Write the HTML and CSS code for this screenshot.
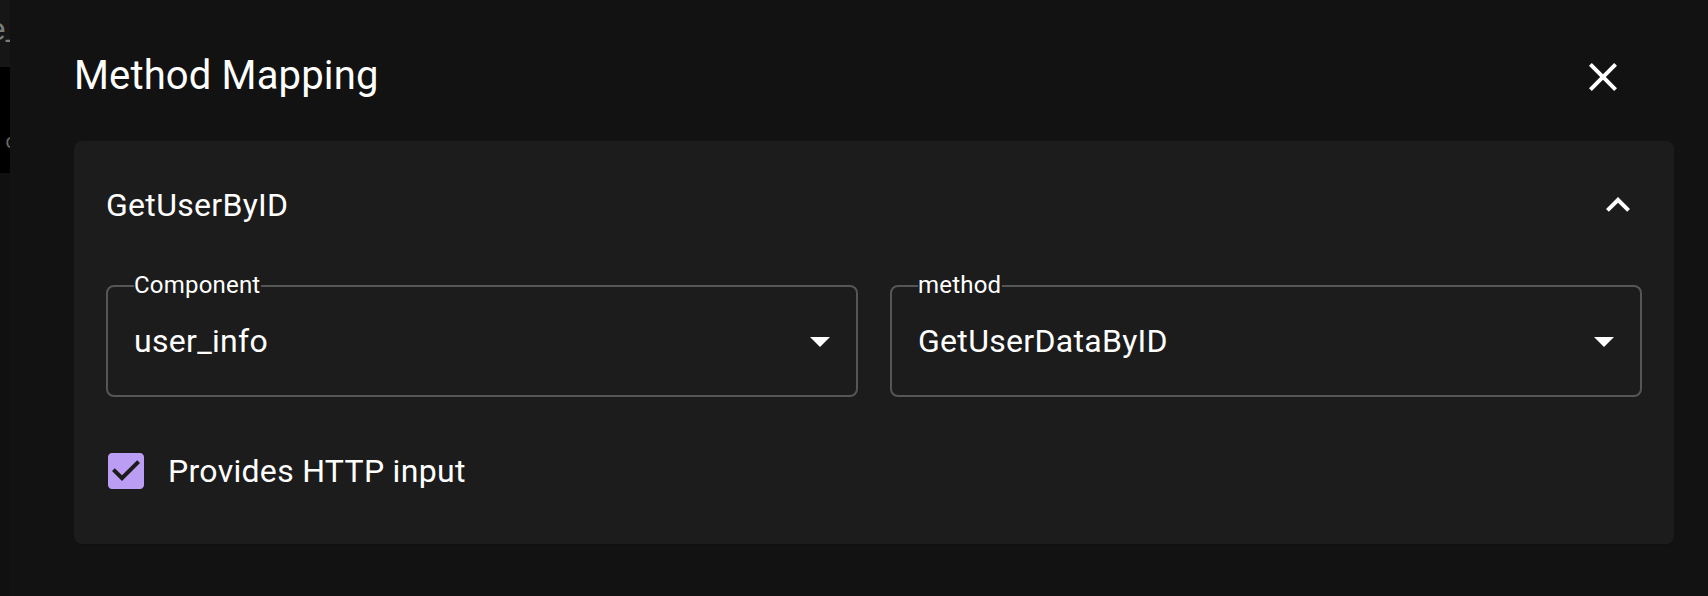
FILE: index.html
```html
<!DOCTYPE html>
<html lang="en">
<head>
<meta charset="utf-8">
<title>Method Mapping</title>
<link rel="stylesheet" href="styles.css">
</head>
<body>
<div class="page">
  <div class="strip">
    <div class="strip-top"><span class="strip-text">name_</span></div>
    <div class="strip-black"><span class="strip-text small">c</span></div>
    <div class="strip-rest"></div>
  </div>
  <div class="dialog">
    <div class="dialog-title">
      <h2 class="title-text">Method Mapping</h2>
      <button class="icon-btn close-btn" aria-label="close">
        <svg viewBox="0 0 24 24" width="48" height="48"><path fill="#fff" d="M19 6.41 17.59 5 12 10.59 6.41 5 5 6.41 10.59 12 5 17.59 6.41 19 12 13.41 17.59 19 19 17.59 13.41 12z"/></svg>
      </button>
    </div>
    <div class="accordion">
      <div class="summary">
        <span class="summary-text">GetUserByID</span>
        <svg class="summary-icon" viewBox="0 0 24 24" width="48" height="48"><path fill="#fff" d="m12 8-6 6 1.41 1.41L12 10.83l4.59 4.58L18 14z"/></svg>
      </div>
      <div class="details">
        <div class="fields">
          <div class="field">
            <span class="field-label">Component</span>
            <span class="field-value">user_info</span>
            <svg class="field-arrow" viewBox="0 0 24 24" width="48" height="48"><path fill="#fff" d="M7 10l5 5 5-5z"/></svg>
          </div>
          <div class="field">
            <span class="field-label">method</span>
            <span class="field-value">GetUserDataByID</span>
            <svg class="field-arrow" viewBox="0 0 24 24" width="48" height="48"><path fill="#fff" d="M7 10l5 5 5-5z"/></svg>
          </div>
        </div>
        <label class="check">
          <span class="check-box">
            <svg viewBox="0 0 24 24" width="48" height="48"><path fill="#bb9ef3" d="M19 3H5c-1.11 0-2 .9-2 2v14c0 1.1.89 2 2 2h14c1.11 0 2-.9 2-2V5c0-1.1-.89-2-2-2zm-9 14l-5-5 1.41-1.41L10 14.17l7.59-7.59L19 8l-9 9z"/></svg>
          </span>
          <span class="check-label">Provides HTTP input</span>
        </label>
      </div>
    </div>
  </div>
</div>
</body>
</html>
```

FILE: styles.css
```css
html, body {
  margin: 0;
  padding: 0;
  background: #121212;
}

body {
  font-family: Roboto, "Liberation Sans", Arial, sans-serif;
  color: #fff;
}

.page {
  display: flex;
  width: 1708px;
  height: 596px;
  overflow: hidden;
}

.strip {
  width: 10px;
  flex: 0 0 10px;
  display: flex;
  flex-direction: column;
  overflow: hidden;
}

.strip-top {
  height: 67px;
  box-sizing: border-box;
  padding-top: 5px;
  background: #161616;
  display: flex;
  justify-content: flex-end;
  align-items: flex-start;
  overflow: hidden;
}

.strip-text {
  white-space: nowrap;
  font-size: 32px;
  line-height: 48px;
  color: #7c7c7c;
  margin-right: -10px;
}

.strip-black {
  height: 106px;
  box-sizing: border-box;
  padding-top: 62px;
  background: #000;
  display: flex;
  justify-content: flex-end;
  align-items: flex-start;
  overflow: hidden;
}

.strip-text.small {
  font-size: 20px;
  line-height: 24px;
  margin-right: -6px;
  color: #6a6a6a;
}

.strip-rest {
  flex: 1;
  background: #101010;
}

.dialog {
  flex: 1;
  background: #121212;
  padding: 44px 34px 0 64px;
  display: flex;
  flex-direction: column;
}

.dialog-title {
  display: flex;
  align-items: center;
  justify-content: space-between;
  height: 64px;
}

.title-text {
  margin: 0;
  font-size: 40px;
  font-weight: 400;
  line-height: 64px;
  letter-spacing: 0.15px;
}

.icon-btn {
  background: none;
  border: 0;
  padding: 0;
  width: 48px;
  height: 48px;
  display: flex;
  cursor: pointer;
}

.close-btn {
  margin-right: 47px;
  margin-top: 2px;
}

.accordion {
  margin-top: 33px;
  background: #1c1c1c;
  border-radius: 8px;
  box-shadow: 0 2px 2px -2px rgba(0, 0, 0, 0.4);
}

.summary {
  height: 128px;
  padding: 0 32px;
  display: flex;
  align-items: center;
  justify-content: space-between;
}

.summary-text {
  font-size: 32px;
  line-height: 48px;
  letter-spacing: 0.3px;
}

.summary-icon {
  display: block;
}

.details {
  padding: 16px 32px 31px;
  display: flex;
  flex-direction: column;
  gap: 32px;
}

.fields {
  display: grid;
  grid-template-columns: 1fr 1fr;
  gap: 32px;
}

.field {
  position: relative;
  height: 112px;
  box-sizing: border-box;
  border: 2px solid #565656;
  border-radius: 8px;
  padding: 0 12px 0 26px;
  display: flex;
  align-items: center;
  justify-content: space-between;
}

.field-label {
  position: absolute;
  left: 26px;
  top: -14px;
  font-size: 24px;
  line-height: 24px;
  background: #1c1c1c;
  padding: 0 1px 0 0;
  letter-spacing: 0.2px;
}

.field-value {
  font-size: 32px;
  line-height: 48px;
  letter-spacing: 0.3px;
}

.field-arrow {
  display: block;
}

.check {
  display: flex;
  align-items: center;
  margin-left: -22px;
  height: 84px;
}

.check-box {
  padding: 18px;
  display: flex;
}

.check-box svg {
  display: block;
}

.check-label {
  font-size: 32px;
  line-height: 48px;
  letter-spacing: 0.3px;
}
```
